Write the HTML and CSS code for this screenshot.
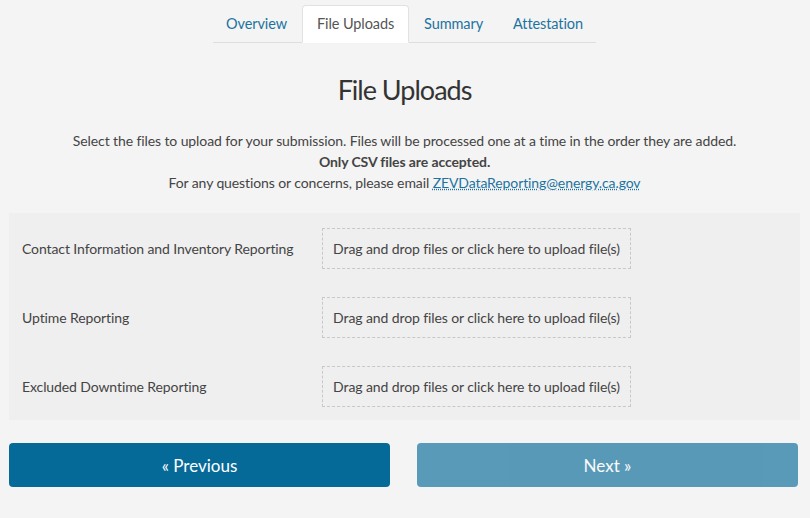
FILE: index.html
```html
<!DOCTYPE html>
<html lang="en">
<head>
    <meta charset="UTF-8">
    <meta name="viewport" content="width=device-width, initial-scale=1.0">
    <title>File Uploads</title>
    <link rel="stylesheet" href="styles.css">
</head>
<body>
    <div class="page">
        <ul class="tabs">
            <li><a href="#">Overview</a></li>
            <li class="active"><a href="#">File Uploads</a></li>
            <li><a href="#">Summary</a></li>
            <li><a href="#">Attestation</a></li>
        </ul>

        <h1 class="page-title">File Uploads</h1>

        <div class="intro">
            <p>Select the files to upload for your submission. Files will be processed one at a time in the order they are added.</p>
            <p><strong>Only CSV files are accepted.</strong></p>
            <p>For any questions or concerns, please email <a href="#">ZEVDataReporting@energy.ca.gov</a></p>
        </div>

        <div class="upload-panel">
            <div class="upload-row">
                <span class="upload-label">Contact Information and Inventory Reporting</span>
                <div class="dropzone">Drag and drop files or click here to upload file(s)</div>
            </div>
            <div class="upload-row">
                <span class="upload-label">Uptime Reporting</span>
                <div class="dropzone">Drag and drop files or click here to upload file(s)</div>
            </div>
            <div class="upload-row">
                <span class="upload-label">Excluded Downtime Reporting</span>
                <div class="dropzone">Drag and drop files or click here to upload file(s)</div>
            </div>
        </div>

        <div class="nav-buttons">
            <button class="nav-btn">&laquo; Previous</button>
            <button class="nav-btn" disabled>Next &raquo;</button>
        </div>
    </div>
</body>
</html>
```

FILE: styles.css
```css
body {
    margin: 0;
    font-family: Lato, "Open Sans", sans-serif;
    background-color: #f4f4f4;
    color: #444;
    letter-spacing: -0.1px;
}
.page {
    padding: 5px 10px 0 9px;
}
.tabs {
    list-style: none;
    margin: 0 auto;
    padding: 0;
    width: 383px;
    display: flex;
    justify-content: center;
    border-bottom: 1px solid #dedede;
}
.tabs li {
    margin-bottom: -1px;
    white-space: nowrap;
}
.tabs a {
    display: block;
    padding: 9px 14px 9px;
    font-size: 14.5px;
    line-height: 18px;
    color: #1c73a0;
    text-decoration: none;
    border: 1px solid transparent;
    border-radius: 4px 4px 0 0;
}
.tabs .active a {
    background-color: #fff;
    color: #555;
    border-color: #e2e2e2 #e2e2e2 #fff;
}
.page-title {
    margin: 30px 0 0;
    text-align: center;
    font-size: 27px;
    line-height: 34px;
    font-weight: 400;
    letter-spacing: -1px;
    color: #333;
}
.intro {
    margin-top: 23px;
    text-align: center;
    font-size: 14px;
}
.intro p {
    margin: 0;
    line-height: 21px;
}
.intro strong {
    color: #444;
}
.intro a {
    color: #1c73a0;
    text-decoration: underline dotted;
}
.upload-panel {
    margin-top: 20px;
    padding: 15px 0 13px 13px;
    background-color: #efefef;
}
.upload-row {
    display: flex;
    align-items: center;
}
.upload-row + .upload-row {
    margin-top: 28px;
}
.upload-label {
    width: 300px;
    font-size: 14px;
}
.dropzone {
    width: 307px;
    height: 39px;
    display: flex;
    align-items: center;
    justify-content: center;
    border: 1px dashed #c8c8c8;
    font-size: 14px;
    color: #444;
}
.nav-buttons {
    display: flex;
    gap: 27px;
    margin: 23px 2px 0 0;
}
.nav-btn {
    flex: 1;
    height: 44px;
    background-color: #066a99;
    color: #fff;
    border: none;
    border-radius: 4px;
    font-family: inherit;
    font-size: 17px;
    cursor: pointer;
}
.nav-btn:disabled {
    opacity: 0.65;
    cursor: default;
}
```
